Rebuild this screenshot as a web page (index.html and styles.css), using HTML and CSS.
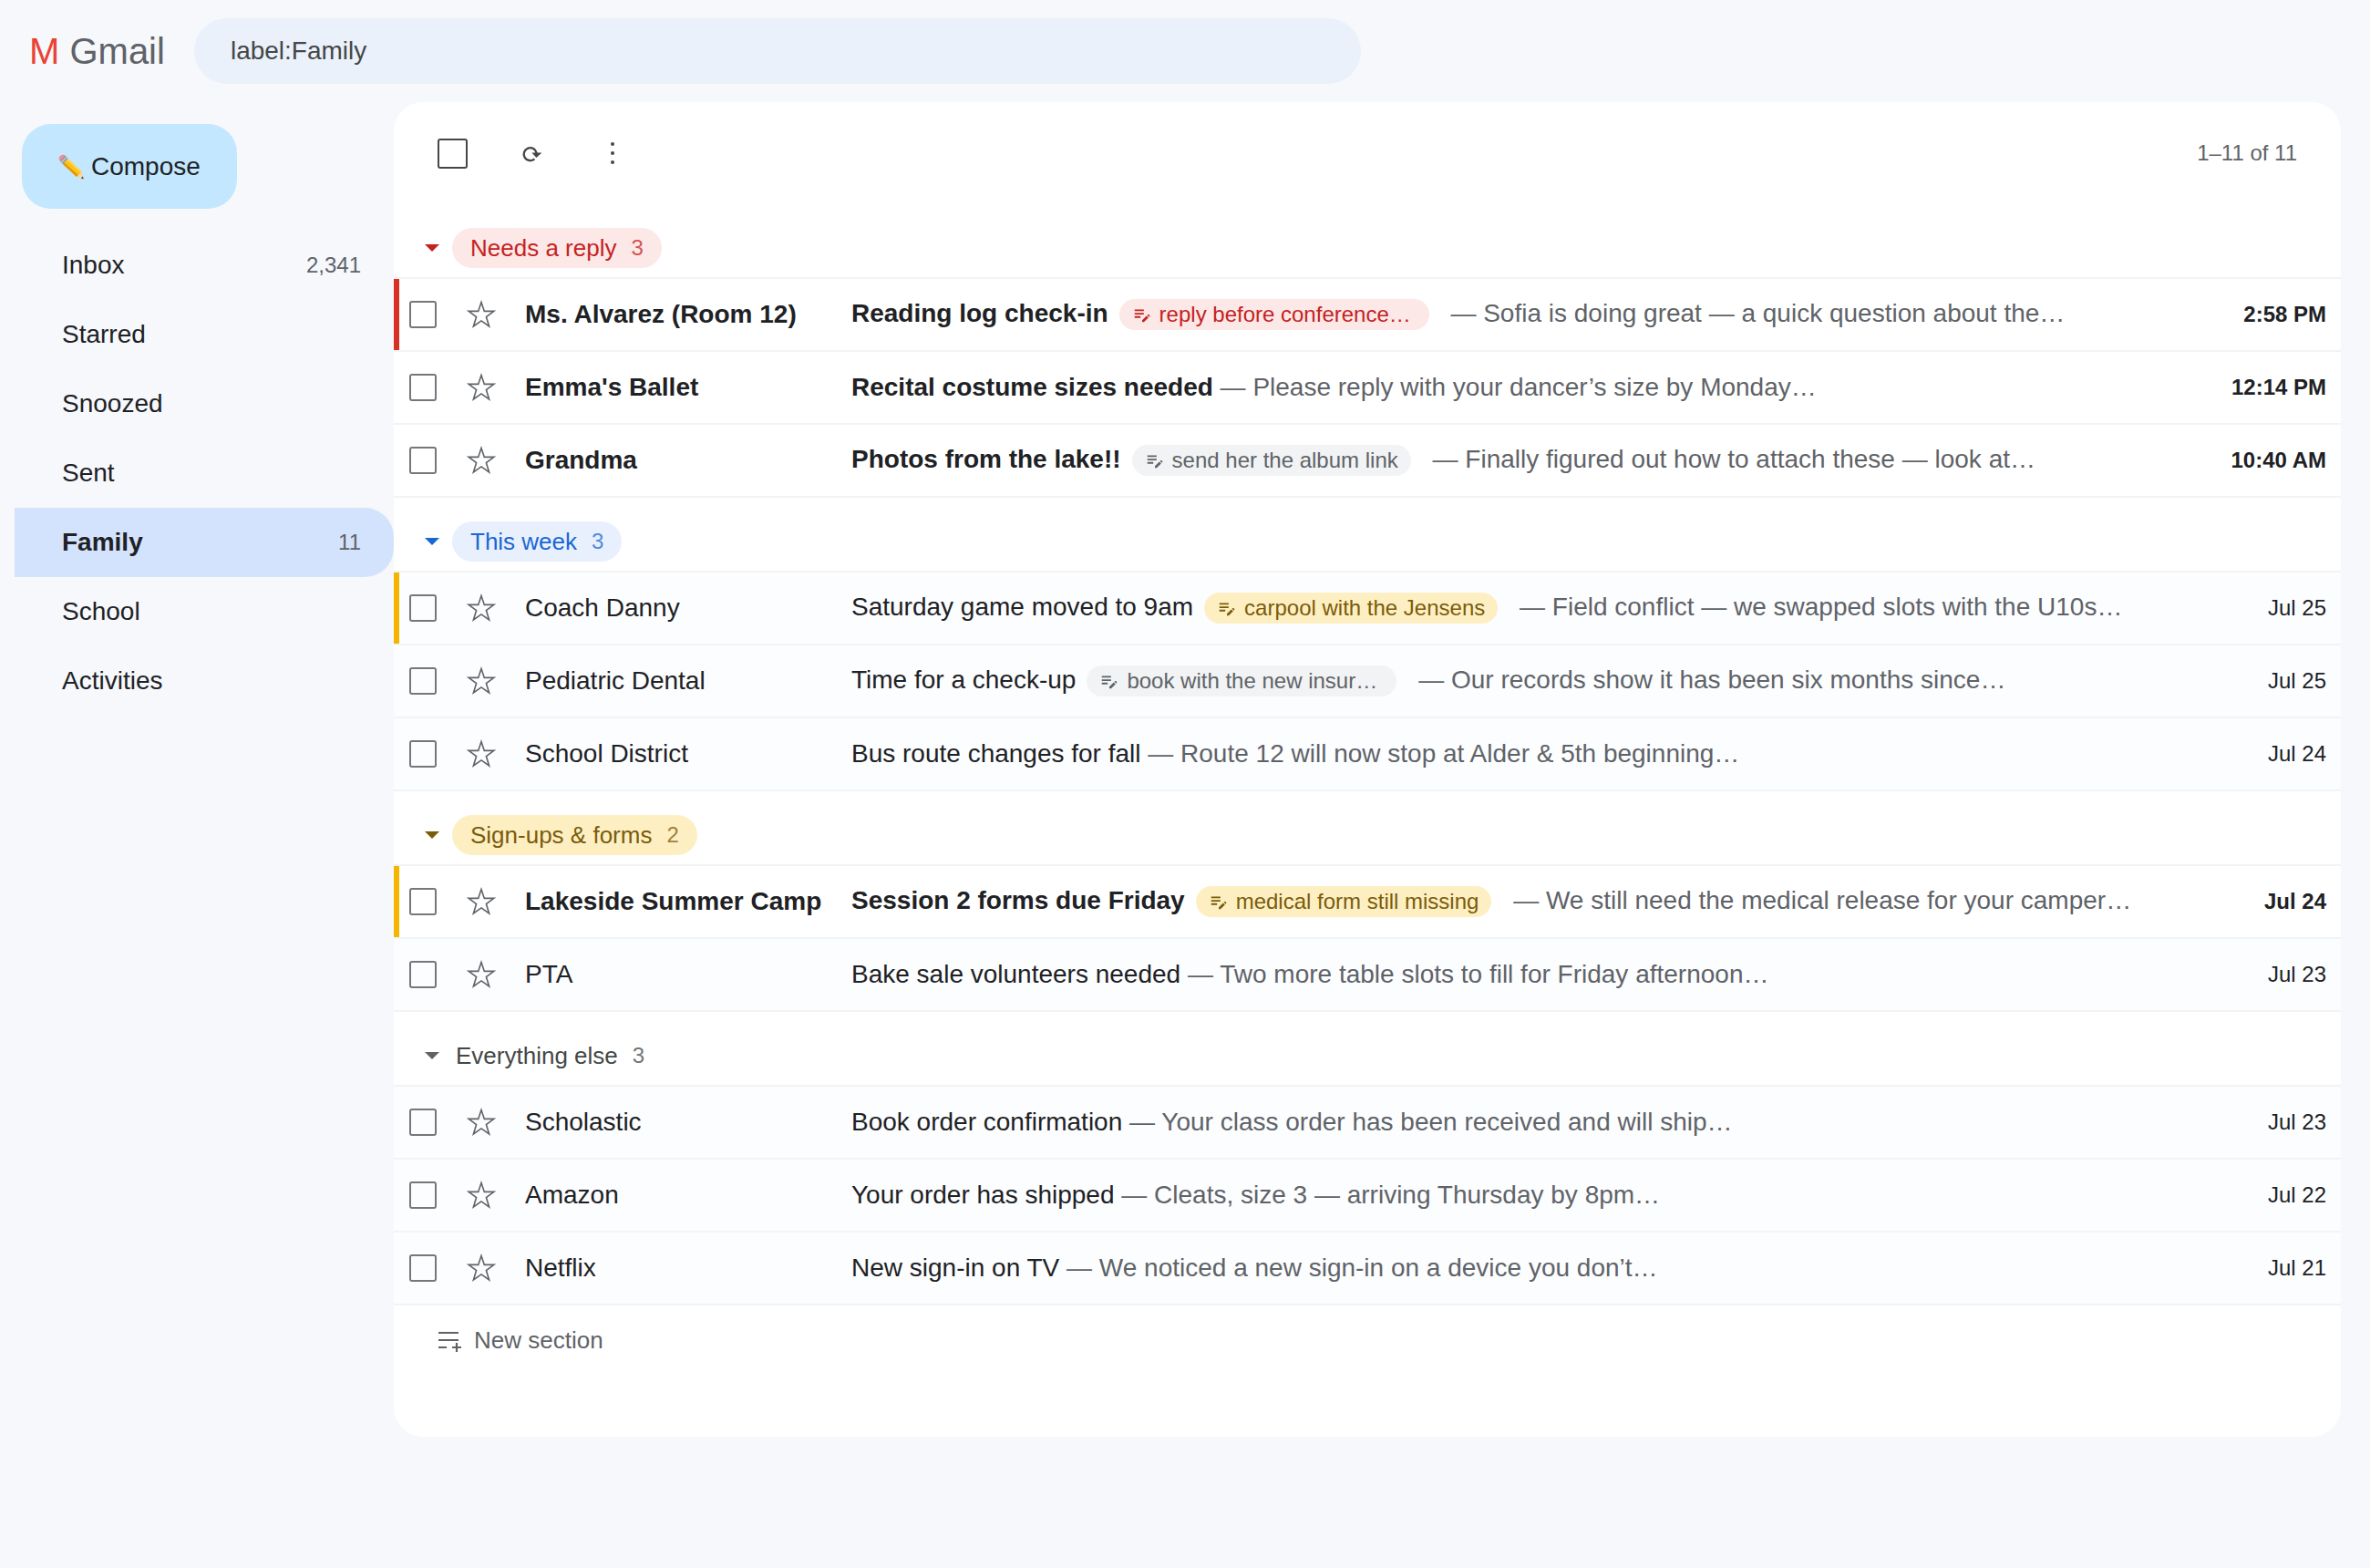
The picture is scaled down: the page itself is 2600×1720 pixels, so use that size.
FILE: index.html
```html
<!DOCTYPE html>
<html lang="en">
<head>
  <meta charset="UTF-8">
  <meta name="viewport" content="width=device-width, initial-scale=1.0">
  <title>Gmail - Family</title>
  <link rel="stylesheet" href="styles.css">
</head>
<body>
  <svg class="sprite" aria-hidden="true">
    <symbol id="star" viewBox="0 0 32 32">
      <path d="M16 2.5l3.3 9.9h10.6l-8.5 6.2 3.2 10.4L16 22.9l-8.6 6.1 3.2-10.4-8.5-6.2h10.6z" fill="none" stroke="currentColor" stroke-width="1.6"/>
    </symbol>
    <symbol id="note" viewBox="0 0 24 24">
      <path d="M3 10h11v2H3v-2zm0-2h11V6H3v2zm0 8h7v-2H3v2zm15.01-3.13.71-.71c.39-.39 1.02-.39 1.41 0l.71.71c.39.39.39 1.02 0 1.41l-.71.71-2.12-2.12zm-.71.71-5.3 5.3V21h2.12l5.3-5.3-2.12-2.12z" fill="currentColor"/>
    </symbol>
  </svg>

  <header class="header">
    <div class="logo"><span class="logo-m">M</span> Gmail</div>
    <input class="search" type="text" value="label:Family" aria-label="Search mail">
  </header>

  <div class="layout">
    <aside class="sidebar">
      <button class="compose">
        <svg class="pencil" viewBox="0 0 28 28" aria-hidden="true">
          <path d="M1 6.2Q0 4 2.2 2Q4.6 0 6.8 1L9 3.2L3.4 9z" fill="#f08a94"/>
          <path d="M7.6 1.8L10.8 5.2L4.8 11L2 7.4z" fill="#8d99a3"/>
          <path d="M8.4 2.8L9.6 4L3.8 9.8L2.8 8.6z" fill="#b9c3cb"/>
          <path d="M10.8 5.2L25.8 19.4L20 25L4.8 11z" fill="#fcc419"/>
          <path d="M6.6 9.2L22 23L20 25L4.8 11z" fill="#e8960c"/>
          <path d="M10.8 5.2L25.8 19.4L24.6 20.6L9.4 6.6z" fill="#ffd84d"/>
          <path d="M25.8 19.4L27.6 27.4L20 25z" fill="#f2d7a6"/>
          <path d="M27 24.6L27.6 27.4L24.8 26.5z" fill="#3c4043"/>
        </svg>
        Compose
      </button>
      <nav class="nav">
        <a class="nav-item" href="#inbox">Inbox <span class="nav-count">2,341</span></a>
        <a class="nav-item" href="#starred">Starred</a>
        <a class="nav-item" href="#snoozed">Snoozed</a>
        <a class="nav-item" href="#sent">Sent</a>
        <a class="nav-item active" href="#family">Family <span class="nav-count">11</span></a>
        <a class="nav-item" href="#school">School</a>
        <a class="nav-item" href="#activities">Activities</a>
      </nav>
    </aside>

    <main class="main">
      <div class="toolbar">
        <input class="check check-all" type="checkbox" aria-label="Select all">
        <button class="tool" aria-label="Refresh">
          <svg class="tool-icon" viewBox="0 0 24 24" aria-hidden="true">
            <path d="M15.4 18.3A7 7 0 1 1 17.6 12" fill="none" stroke="currentColor" stroke-width="2.4"/>
            <path d="M12.4 11.6L23.4 11.6L17.4 17z" fill="currentColor"/>
          </svg>
        </button>
        <button class="tool" aria-label="More">
          <svg class="tool-icon" viewBox="0 0 24 24" aria-hidden="true">
            <circle cx="12" cy="2" r="2" fill="currentColor"/>
            <circle cx="12" cy="12" r="2" fill="currentColor"/>
            <circle cx="12" cy="22" r="2" fill="currentColor"/>
          </svg>
        </button>
        <span class="pages">1–11 of 11</span>
      </div>

      <section>
        <h2 class="section-head red"><span class="arrow"></span><span class="pill">Needs a reply <span class="count">3</span></span></h2>
        <div class="row unread bar-red">
          <input class="check" type="checkbox" aria-label="Select Ms. Alvarez">
          <button class="star" aria-label="Star"><svg><use href="#star"/></svg></button>
          <span class="sender">Ms. Alvarez (Room 12)</span>
          <span class="content"><span class="subject">Reading log check-in</span><span class="chip long red"><svg><use href="#note"/></svg>reply before conference…</span> <span class="snippet">— Sofia is doing great — a quick question about the…</span></span>
          <time class="date">2:58 PM</time>
        </div>
        <div class="row unread">
          <input class="check" type="checkbox" aria-label="Select Emma's Ballet">
          <button class="star" aria-label="Star"><svg><use href="#star"/></svg></button>
          <span class="sender">Emma's Ballet</span>
          <span class="content"><span class="subject">Recital costume sizes needed</span> <span class="snippet">— Please reply with your dancer’s size by Monday…</span></span>
          <time class="date">12:14 PM</time>
        </div>
        <div class="row unread">
          <input class="check" type="checkbox" aria-label="Select Grandma">
          <button class="star" aria-label="Star"><svg><use href="#star"/></svg></button>
          <span class="sender">Grandma</span>
          <span class="content"><span class="subject">Photos from the lake!!</span><span class="chip"><svg><use href="#note"/></svg>send her the album link</span> <span class="snippet">— Finally figured out how to attach these — look at…</span></span>
          <time class="date">10:40 AM</time>
        </div>
      </section>

      <section>
        <h2 class="section-head blue"><span class="arrow"></span><span class="pill">This week <span class="count">3</span></span></h2>
        <div class="row bar-yellow">
          <input class="check" type="checkbox" aria-label="Select Coach Danny">
          <button class="star" aria-label="Star"><svg><use href="#star"/></svg></button>
          <span class="sender">Coach Danny</span>
          <span class="content"><span class="subject">Saturday game moved to 9am</span><span class="chip yellow"><svg><use href="#note"/></svg>carpool with the Jensens</span> <span class="snippet">— Field conflict — we swapped slots with the U10s…</span></span>
          <time class="date">Jul 25</time>
        </div>
        <div class="row">
          <input class="check" type="checkbox" aria-label="Select Pediatric Dental">
          <button class="star" aria-label="Star"><svg><use href="#star"/></svg></button>
          <span class="sender">Pediatric Dental</span>
          <span class="content"><span class="subject">Time for a check-up</span><span class="chip long"><svg><use href="#note"/></svg>book with the new insur…</span> <span class="snippet">— Our records show it has been six months since…</span></span>
          <time class="date">Jul 25</time>
        </div>
        <div class="row">
          <input class="check" type="checkbox" aria-label="Select School District">
          <button class="star" aria-label="Star"><svg><use href="#star"/></svg></button>
          <span class="sender">School District</span>
          <span class="content"><span class="subject">Bus route changes for fall</span> <span class="snippet">— Route 12 will now stop at Alder &amp; 5th beginning…</span></span>
          <time class="date">Jul 24</time>
        </div>
      </section>

      <section>
        <h2 class="section-head yellow"><span class="arrow"></span><span class="pill">Sign-ups &amp; forms <span class="count">2</span></span></h2>
        <div class="row unread bar-yellow">
          <input class="check" type="checkbox" aria-label="Select Lakeside Summer Camp">
          <button class="star" aria-label="Star"><svg><use href="#star"/></svg></button>
          <span class="sender">Lakeside Summer Camp</span>
          <span class="content"><span class="subject">Session 2 forms due Friday</span><span class="chip yellow"><svg><use href="#note"/></svg>medical form still missing</span> <span class="snippet">— We still need the medical release for your camper…</span></span>
          <time class="date">Jul 24</time>
        </div>
        <div class="row">
          <input class="check" type="checkbox" aria-label="Select PTA">
          <button class="star" aria-label="Star"><svg><use href="#star"/></svg></button>
          <span class="sender">PTA</span>
          <span class="content"><span class="subject">Bake sale volunteers needed</span> <span class="snippet">— Two more table slots to fill for Friday afternoon…</span></span>
          <time class="date">Jul 23</time>
        </div>
      </section>

      <section>
        <h2 class="section-head plain"><span class="arrow"></span><span class="pill">Everything else <span class="count">3</span></span></h2>
        <div class="row">
          <input class="check" type="checkbox" aria-label="Select Scholastic">
          <button class="star" aria-label="Star"><svg><use href="#star"/></svg></button>
          <span class="sender">Scholastic</span>
          <span class="content"><span class="subject">Book order confirmation</span> <span class="snippet">— Your class order has been received and will ship…</span></span>
          <time class="date">Jul 23</time>
        </div>
        <div class="row">
          <input class="check" type="checkbox" aria-label="Select Amazon">
          <button class="star" aria-label="Star"><svg><use href="#star"/></svg></button>
          <span class="sender">Amazon</span>
          <span class="content"><span class="subject">Your order has shipped</span> <span class="snippet">— Cleats, size 3 — arriving Thursday by 8pm…</span></span>
          <time class="date">Jul 22</time>
        </div>
        <div class="row">
          <input class="check" type="checkbox" aria-label="Select Netflix">
          <button class="star" aria-label="Star"><svg><use href="#star"/></svg></button>
          <span class="sender">Netflix</span>
          <span class="content"><span class="subject">New sign-in on TV</span> <span class="snippet">— We noticed a new sign-in on a device you don’t…</span></span>
          <time class="date">Jul 21</time>
        </div>
      </section>

      <button class="new-section">
        <svg viewBox="0 0 32 32" aria-hidden="true">
          <path d="M5 8h22M5 16h22M5 24h9M20 24h10M25 19v10" fill="none" stroke="currentColor" stroke-width="2.2"/>
        </svg>
        New section
      </button>
    </main>
  </div>
</body>
</html>
```
FILE: styles.css
```css
* {
  box-sizing: border-box;
}
body {
  margin: 0;
  min-height: 100vh;
  background: #f6f8fc;
  color: #202124;
  font-family: "Liberation Sans", Helvetica, Arial, sans-serif;
  font-size: 28px;
  line-height: 32px;
}
button {
  font: inherit;
  color: inherit;
  border: none;
  background: none;
  padding: 0;
  cursor: pointer;
}
.sprite {
  display: none;
}

/* header */
.header {
  display: flex;
  align-items: center;
  gap: 32px;
  padding: 20px 32px;
}
.logo {
  font-size: 40px;
  color: #5f6368;
}
.logo-m {
  color: #ea4335;
}
.search {
  flex: 1;
  max-width: 1280px;
  height: 72px;
  padding: 0 40px;
  border: none;
  border-radius: 36px;
  background: #eaf1fb;
  color: #444746;
  font: inherit;
}

/* sidebar */
.layout {
  display: flex;
  align-items: flex-start;
  padding: 0 32px 0 16px;
}
.sidebar {
  flex: 0 0 416px;
  padding-top: 24px;
}
.compose {
  display: flex;
  align-items: center;
  gap: 8px;
  margin: 0 0 24px 8px;
  padding: 30px 40px;
  border-radius: 32px;
  background: #c2e7ff;
  line-height: 33px;
}
.pencil {
  width: 28px;
  height: 28px;
}
.nav-item {
  display: flex;
  align-items: center;
  justify-content: space-between;
  height: 76px;
  padding: 0 36px 0 52px;
  border-radius: 0 32px 32px 0;
  color: inherit;
  text-decoration: none;
}
.nav-item.active {
  background: #d3e3fd;
  font-weight: bold;
}
.nav-count {
  font-size: 24px;
  font-weight: normal;
  color: #5f6368;
}

/* mail list */
.main {
  flex: 1;
  min-width: 0;
  padding-bottom: 68px;
  border-radius: 32px;
  background: #fff;
  overflow: hidden;
}
.toolbar {
  display: flex;
  align-items: center;
  height: 112px;
  padding: 0 48px;
  color: #444746;
}
.check {
  appearance: none;
  flex: none;
  width: 30px;
  height: 30px;
  margin: 0;
  border: 2px solid #74777c;
  border-radius: 3px;
}
.check-all {
  width: 33px;
  height: 33px;
  border-color: #444746;
  margin-right: 58px;
}
.tool {
  display: flex;
  margin-right: 65px;
}
.tool-icon {
  width: 24px;
  height: 24px;
}
.pages {
  margin-left: auto;
  font-size: 24px;
  color: #5f6368;
}

.section-head {
  display: flex;
  align-items: center;
  gap: 14px;
  margin: 0;
  padding: 26px 34px 10px;
  border-bottom: 2px solid #f1f3f4;
  font-size: 26px;
  font-weight: normal;
}
.arrow {
  border: 8px solid transparent;
  border-top-color: currentColor;
  border-bottom: none;
}
.pill {
  display: flex;
  align-items: center;
  gap: 16px;
  height: 44px;
  padding: 0 20px;
  border-radius: 22px;
}
.count {
  font-size: 24px;
  opacity: 0.75;
}
.red {
  color: #c5221f;
}
.red .pill,
.chip.red {
  background: #fce8e6;
}
.blue {
  color: #1967d2;
}
.blue .pill {
  background: #e8f0fe;
}
.yellow {
  color: #7a5c0a;
}
.yellow .pill,
.chip.yellow {
  background: #feefc3;
}
.plain {
  color: #444746;
}
.plain .arrow {
  color: #5f6368;
}
.plain .pill {
  padding: 0 4px;
}

.row {
  display: flex;
  align-items: center;
  height: 80px;
  padding: 0 16px 0 17px;
  border-bottom: 2px solid #f1f3f4;
  background: #fcfdff;
}
.row.unread {
  background: #fff;
}
.bar-red {
  box-shadow: inset 6px 0 #d93025;
}
.bar-yellow {
  box-shadow: inset 6px 0 #f4b400;
}
.star {
  display: flex;
  margin: 0 32px 0 33px;
  color: #5f6368;
}
.star svg {
  width: 32px;
  height: 32px;
}
.sender {
  flex: 0 0 340px;
  margin-right: 18px;
  overflow: hidden;
  white-space: nowrap;
  text-overflow: ellipsis;
}
.content {
  flex: 1;
  min-width: 0;
  overflow: hidden;
  white-space: nowrap;
  text-overflow: ellipsis;
}
.unread .sender,
.unread .subject,
.unread .date {
  font-weight: bold;
}
.chip {
  display: inline-flex;
  align-items: center;
  gap: 8px;
  height: 34px;
  margin: 0 16px 0 12px;
  padding: 0 14px;
  border-radius: 17px;
  background: #f1f3f4;
  font-size: 24px;
  vertical-align: middle;
}
.chip.long {
  width: 340px;
}
.chip:not(.red):not(.yellow) {
  color: #5f6368;
}
.chip svg {
  flex: none;
  width: 22px;
  height: 22px;
}
.snippet {
  color: #5f6368;
}
.date {
  margin-left: 16px;
  font-size: 24px;
}
.new-section {
  display: flex;
  align-items: center;
  gap: 12px;
  margin-left: 44px;
  padding: 22px 0;
  color: #5f6368;
  font-size: 26px;
}
.new-section svg {
  width: 32px;
  height: 32px;
}
```
